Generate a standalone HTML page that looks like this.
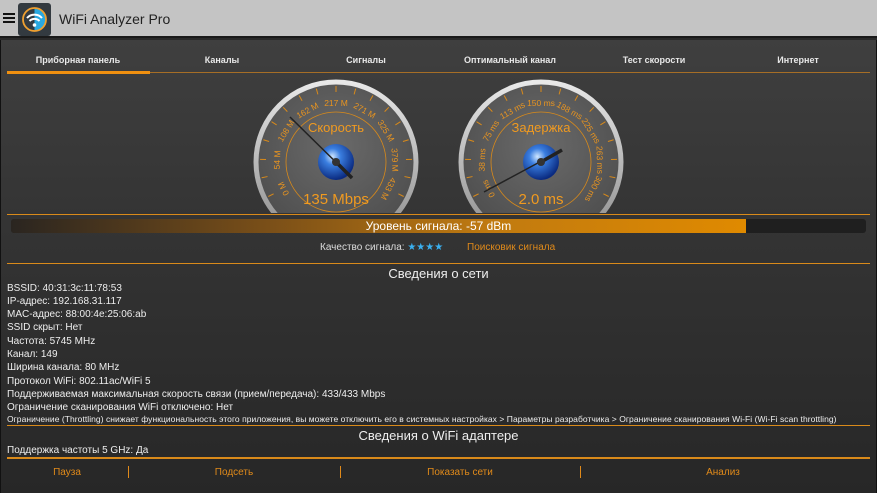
<!DOCTYPE html>
<html><head><meta charset="utf-8"><style>
*{margin:0;padding:0;box-sizing:border-box}
body{width:877px;height:493px;overflow:hidden;font-family:"Liberation Sans",sans-serif;background:#2a2a2a;position:relative}
.top{position:absolute;left:0;top:0;width:877px;height:38px;background:#c4c4c4;border-bottom:2px solid #1a1a1a}
.content{position:absolute;left:0;top:40px;width:877px;height:453px;background:linear-gradient(#3f3f3f,#343434 40%,#272727);border-left:1px solid #111;border-right:1px solid #111}
.t{position:absolute;white-space:nowrap}
.tab{position:absolute;top:55px;width:144px;text-align:center;font-size:9px;font-weight:bold;color:#e8e8e8}
.info{position:absolute;left:7px;font-size:10px;color:#eee;white-space:nowrap}
.ol{position:absolute;left:7px;width:863px;height:1px;background:#d98a1a}
.btn{position:absolute;top:467px;font-size:10px;color:#e08a1a;text-align:center}
.sep{position:absolute;top:466px;width:1px;height:12px;background:#e08a1a}
</style></head><body>
<div class="top">
 <div style="position:absolute;left:3px;top:13px;width:12px;height:2px;background:#111;box-shadow:0 4px 0 #111,0 8px 0 #111"></div>
 <svg style="position:absolute;left:18px;top:3px" width="33" height="33" viewBox="0 0 33 33">
  <rect x="0" y="0" width="33" height="33" rx="3" fill="#333a40"/>
  <path d="M16.5 5 A11.5 11.5 0 0 1 16.5 28 Z" fill="#29a8e0"/>
  <circle cx="16.5" cy="16.5" r="11.5" fill="none" stroke="#f0a030" stroke-width="1.8"/>
  <path d="M9 15 A10 10 0 0 1 24 15" fill="none" stroke="#fff" stroke-width="2"/>
  <path d="M11.5 18 A7 7 0 0 1 21.5 18" fill="none" stroke="#fff" stroke-width="2"/>
  <circle cx="16.5" cy="22" r="1.8" fill="#fff"/>
 </svg>
 <div class="t" style="left:59px;top:11px;font-size:14px;color:#222">WiFi Analyzer Pro</div>
</div>
<div class="content"></div>
<div class="tab" style="left:6px">Приборная панель</div>
<div class="tab" style="left:150px">Каналы</div>
<div class="tab" style="left:294px">Сигналы</div>
<div class="tab" style="left:438px">Оптимальный канал</div>
<div class="tab" style="left:582px">Тест скорости</div>
<div class="tab" style="left:726px">Интернет</div>
<div style="position:absolute;left:7px;top:72px;width:863px;height:1px;background:#c07a20;opacity:.8"></div>
<div style="position:absolute;left:7px;top:71px;width:143px;height:3px;background:#f09010"></div>

<svg style="position:absolute;left:0;top:0" width="877" height="213" viewBox="0 0 877 213">
 <defs>
  <radialGradient id="face" cx="50%" cy="40%" r="60%"><stop offset="0" stop-color="#6a6a6a"/><stop offset="1" stop-color="#4e4e4e"/></radialGradient>
  <radialGradient id="globe" cx="40%" cy="35%" r="65%"><stop offset="0" stop-color="#cfe6ff"/><stop offset=".35" stop-color="#3a7ee0"/><stop offset="1" stop-color="#0a2a80"/></radialGradient>
  <linearGradient id="ring" x1="0" y1="0" x2="0" y2="1"><stop offset="0" stop-color="#e8e8e8"/><stop offset="1" stop-color="#8a8a8a"/></linearGradient>
 </defs>
 <g transform="translate(336,162)">
  <circle r="80" fill="url(#face)" stroke="url(#ring)" stroke-width="5"/>
  <circle r="50" fill="none" stroke="#d98a1a" stroke-width="0.8"/>
  <g stroke="#d98a1a" stroke-width="1">
   <line y1="-76" y2="-70" transform="rotate(-117)"/><line y1="-76" y2="-70" transform="rotate(-102)"/><line y1="-76" y2="-70" transform="rotate(-88)"/><line y1="-76" y2="-70" transform="rotate(-73)"/><line y1="-76" y2="-70" transform="rotate(-58)"/><line y1="-76" y2="-70" transform="rotate(-44)"/><line y1="-76" y2="-70" transform="rotate(-29)"/><line y1="-76" y2="-70" transform="rotate(-15)"/><line y1="-76" y2="-70" transform="rotate(0)"/><line y1="-76" y2="-70" transform="rotate(15)"/><line y1="-76" y2="-70" transform="rotate(29)"/><line y1="-76" y2="-70" transform="rotate(44)"/><line y1="-76" y2="-70" transform="rotate(58)"/><line y1="-76" y2="-70" transform="rotate(73)"/><line y1="-76" y2="-70" transform="rotate(88)"/><line y1="-76" y2="-70" transform="rotate(102)"/><line y1="-76" y2="-70" transform="rotate(117)"/>
  </g>
  <g fill="#e89420" font-size="8.5" text-anchor="middle">
   <text transform="rotate(-117) translate(0,-56)">0 M</text><text transform="rotate(-88) translate(0,-56)">54 M</text><text transform="rotate(-58) translate(0,-56)">108 M</text><text transform="rotate(-29) translate(0,-56)">162 M</text><text transform="rotate(0) translate(0,-56)">217 M</text><text transform="rotate(29) translate(0,-56)">271 M</text><text transform="rotate(58) translate(0,-56)">325 M</text><text transform="rotate(88) translate(0,-56)">379 M</text><text transform="rotate(117) translate(0,-56)">433 M</text>
  </g>
  <text y="-30" fill="#f09a20" font-size="13" text-anchor="middle">Скорость</text>
  <text y="42" fill="#f09a20" font-size="15" text-anchor="middle">135 Mbps</text>
  <circle r="18" fill="url(#globe)"/>
  <line x1="-46" y1="-45" x2="16" y2="16" stroke="#222" stroke-width="1.5"/>
  <line x1="0" y1="0" x2="16" y2="16" stroke="#222" stroke-width="3.5"/>
  <circle r="4" fill="#333"/>
 </g>
 <g transform="translate(541,162)">
  <circle r="80" fill="url(#face)" stroke="url(#ring)" stroke-width="5"/>
  <circle r="50" fill="none" stroke="#d98a1a" stroke-width="0.8"/>
  <g stroke="#d98a1a" stroke-width="1">
   <line y1="-76" y2="-70" transform="rotate(-117)"/><line y1="-76" y2="-70" transform="rotate(-102)"/><line y1="-76" y2="-70" transform="rotate(-88)"/><line y1="-76" y2="-70" transform="rotate(-73)"/><line y1="-76" y2="-70" transform="rotate(-58)"/><line y1="-76" y2="-70" transform="rotate(-44)"/><line y1="-76" y2="-70" transform="rotate(-29)"/><line y1="-76" y2="-70" transform="rotate(-15)"/><line y1="-76" y2="-70" transform="rotate(0)"/><line y1="-76" y2="-70" transform="rotate(15)"/><line y1="-76" y2="-70" transform="rotate(29)"/><line y1="-76" y2="-70" transform="rotate(44)"/><line y1="-76" y2="-70" transform="rotate(58)"/><line y1="-76" y2="-70" transform="rotate(73)"/><line y1="-76" y2="-70" transform="rotate(88)"/><line y1="-76" y2="-70" transform="rotate(102)"/><line y1="-76" y2="-70" transform="rotate(117)"/>
  </g>
  <g fill="#e89420" font-size="8.5" text-anchor="middle">
   <text transform="rotate(-117) translate(0,-56)">0 ms</text><text transform="rotate(-88) translate(0,-56)">38 ms</text><text transform="rotate(-58) translate(0,-56)">75 ms</text><text transform="rotate(-29) translate(0,-56)">113 ms</text><text transform="rotate(0) translate(0,-56)">150 ms</text><text transform="rotate(29) translate(0,-56)">188 ms</text><text transform="rotate(58) translate(0,-56)">225 ms</text><text transform="rotate(88) translate(0,-56)">263 ms</text><text transform="rotate(117) translate(0,-56)">300 ms</text>
  </g>
  <text y="-30" fill="#f09a20" font-size="13" text-anchor="middle">Задержка</text>
  <text y="42" fill="#f09a20" font-size="15" text-anchor="middle">2.0 ms</text>
  <circle r="18" fill="url(#globe)"/>
  <line x1="-57" y1="30" x2="21" y2="-12" stroke="#222" stroke-width="1.5"/>
  <line x1="0" y1="0" x2="21" y2="-12" stroke="#222" stroke-width="3.5"/>
  <circle r="4" fill="#333"/>
 </g>
</svg>
<div class="ol" style="top:214px"></div>
<div style="position:absolute;left:11px;top:219px;width:855px;height:14px;background:#1f1f1f;border-radius:3px"></div>
<div style="position:absolute;left:11px;top:219px;width:735px;height:14px;background:linear-gradient(90deg,#2a2520,#7a4f18 35%,#c07a10 65%,#e08a00);border-radius:3px 0 0 3px"></div>
<div class="t" style="left:0;width:877px;text-align:center;top:219px;font-size:12px;color:#fff">Уровень сигнала: -57 dBm</div>
<div class="t" style="left:320px;top:242px;font-size:10px;color:#ddd">Качество сигнала: <span style="color:#3ab0f0">★★★★</span></div>
<div class="t" style="left:467px;top:242px;font-size:10px;color:#e08a1a">Поисковик сигнала</div>
<div class="ol" style="top:263px"></div>
<div class="t" style="left:0;width:877px;text-align:center;top:266px;font-size:13px;color:#eee">Сведения о сети</div>
<div class="info" style="top:283px">BSSID: 40:31:3c:11:78:53</div>
<div class="info" style="top:296px">IP-адрес: 192.168.31.117</div>
<div class="info" style="top:309px">MAC-адрес: 88:00:4e:25:06:ab</div>
<div class="info" style="top:322px">SSID скрыт: Нет</div>
<div class="info" style="top:336px">Частота: 5745 MHz</div>
<div class="info" style="top:349px">Канал: 149</div>
<div class="info" style="top:362px">Ширина канала: 80 MHz</div>
<div class="info" style="top:376px">Протокол WiFi: 802.11ac/WiFi 5</div>
<div class="info" style="top:389px">Поддерживаемая максимальная скорость связи (прием/передача): 433/433 Mbps</div>
<div class="info" style="top:402px">Ограничение сканирования WiFi отключено: Нет</div>
<div class="info" style="top:414px;font-size:8.5px;letter-spacing:0.05px">Ограничение (Throttling) снижает функциональность этого приложения, вы можете отключить его в системных настройках &gt; Параметры разработчика &gt; Ограничение сканирования Wi-Fi (Wi-Fi scan throttling)</div>
<div class="ol" style="top:425px"></div>
<div class="t" style="left:0;width:877px;text-align:center;top:428px;font-size:13px;color:#eee">Сведения о WiFi адаптере</div>
<div class="info" style="top:445px">Поддержка частоты 5 GHz: Да</div>
<div class="ol" style="top:457px;height:2px"></div>
<div class="btn" style="left:7px;width:120px">Пауза</div><div class="sep" style="left:128px"></div>
<div class="btn" style="left:129px;width:210px">Подсеть</div><div class="sep" style="left:340px"></div>
<div class="btn" style="left:341px;width:238px">Показать сети</div><div class="sep" style="left:580px"></div>
<div class="btn" style="left:581px;width:284px">Анализ</div>
</body></html>
